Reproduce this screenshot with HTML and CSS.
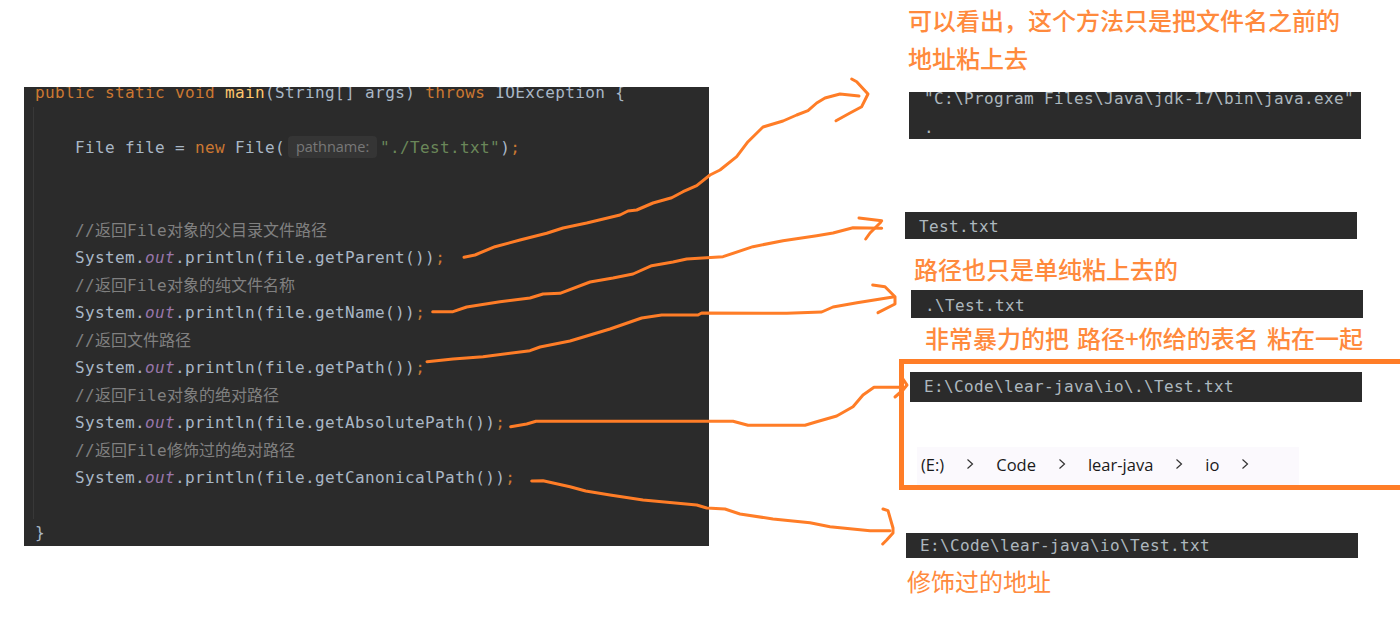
FILE: index.html
```html
<!DOCTYPE html>
<html lang="zh-CN">
<head>
<meta charset="utf-8">
<title>File path methods</title>
<link rel="stylesheet" href="styles.css">
</head>
<body>
<main class="canvas">
  <section class="code">
    <div class="code-inner">
      <div class="line"><span class="kw">public static void</span> <span class="fn">main</span>(String[] args) <span class="kw">throws</span> IOException {</div>
      <div class="method">
        <div class="line"></div>
        <div class="line">File file = <span class="kw">new</span> File(<span class="hint">pathname:</span><span class="str">"./Test.txt"</span>)<span class="kw">;</span></div>
        <div class="line"></div>
        <div class="line"></div>
        <div class="line cm">//<span class="cjk">返回</span>File<span class="cjk">对象的父目录文件路径</span></div>
        <div class="line">System.<span class="field">out</span>.println(file.getParent())<span class="kw">;</span></div>
        <div class="line cm">//<span class="cjk">返回</span>File<span class="cjk">对象的纯文件名称</span></div>
        <div class="line">System.<span class="field">out</span>.println(file.getName())<span class="kw">;</span></div>
        <div class="line cm">//<span class="cjk">返回文件路径</span></div>
        <div class="line">System.<span class="field">out</span>.println(file.getPath())<span class="kw">;</span></div>
        <div class="line cm">//<span class="cjk">返回</span>File<span class="cjk">对象的绝对路径</span></div>
        <div class="line">System.<span class="field">out</span>.println(file.getAbsolutePath())<span class="kw">;</span></div>
        <div class="line cm">//<span class="cjk">返回</span>File<span class="cjk">修饰过的绝对路径</span></div>
        <div class="line">System.<span class="field">out</span>.println(file.getCanonicalPath())<span class="kw">;</span></div>
        <div class="line"></div>
      </div>
      <div class="line">}</div>
    </div>
  </section>

  <p class="note note-a">可以看出，这个方法只是把文件名之前的<br>地址粘上去</p>
  <div class="out out-a"><div class="out-first">"C:\Program Files\Java\jdk-17\bin\java.exe"</div><div class="out-second">.</div></div>
  <div class="out out-b">Test.txt</div>
  <p class="note note-b">路径也只是单纯粘上去的</p>
  <div class="out out-c">.\Test.txt</div>
  <p class="note note-c">非常暴力的把 路径+你给的表名 粘在一起</p>
  <div class="out out-d">E:\Code\lear-java\io\.\Test.txt</div>
  <nav class="crumbs">
    <span class="crumb crumb-drive">(E:)</span>
    <svg class="chev" viewBox="0 0 8 12"><path d="M1.5 1.5 6.5 6l-5 4.5"/></svg>
    <span class="crumb">Code</span>
    <svg class="chev" viewBox="0 0 8 12"><path d="M1.5 1.5 6.5 6l-5 4.5"/></svg>
    <span class="crumb">lear-java</span>
    <svg class="chev" viewBox="0 0 8 12"><path d="M1.5 1.5 6.5 6l-5 4.5"/></svg>
    <span class="crumb">io</span>
    <svg class="chev" viewBox="0 0 8 12"><path d="M1.5 1.5 6.5 6l-5 4.5"/></svg>
  </nav>
  <div class="frame"></div>
  <div class="out out-e">E:\Code\lear-java\io\Test.txt</div>
  <p class="note note-e">修饰过的地址</p>

  <svg class="ink" viewBox="0 0 1400 618">
    <path d="M464 257.3 475 255 495 246.7 520 240 546.7 233.3 563 228 586.7 223 620 215 628 211 636.7 210 653 203 671.7 197.7 683 191.7 696.7 185.7 710 175 720 170 736.7 156.7 748 141.7 763 127 783 121 796.7 115 808 110.7 816.7 103 825 98 840 94 859 96"/>
    <path d="M851.7 79 856.7 81.7 868 94 861.7 106.7 850 113 836 120.7"/>
    <path d="M432.7 311.7 453 311.7 466.7 307 500 301.7 530 298 543 294 560 293.3 590 282 613 278 633 274 651.7 265.7 673 262 686.7 259 706.7 257.7 723 256.7 753 246.7 783 240.7 816.7 235.7 833 233 853 227.7 881.7 228.3"/>
    <path d="M859 218 881.7 220.7 880 223 870 233 865.7 239"/>
    <path d="M427 361.7 453 359 483 356.7 530 350.7 540 347 570 341 586.7 336 610 329 641.7 318 661.7 315 698 315 701.7 313 786.7 313.3 821.7 312 833 307 857 302.7 893 297"/>
    <path d="M872.7 285 885 286.7 895 296.7 895 304 878 312.7"/>
    <path d="M510.7 426.7 526.7 424 536 421.3 733 421.3 748 425.3 805 425.3 816.7 421.7 836.7 416 853 406.7 863 395 874 387.3 903 387.3"/>
    <path d="M903 379 907 385 903 390 895 397"/>
    <path d="M531.7 481 543 480.7 570 486.7 585.7 491 610 495 643 500 696.7 505 706.7 508 725 509 740 514 773 519 810 522.7 830 526.7 870 530.7 890 530.7"/>
    <path d="M883 509 888 510.7 893 528 893 533 886.7 540 882.7 544"/>
  </svg>
</main>
</body>
</html>
```

FILE: styles.css
```css
* { box-sizing: border-box; }
html, body { margin: 0; background: #fff; }
.canvas { position: relative; width: 1400px; height: 618px; overflow: hidden; background: #fff; }

.code, .out {
  font-family: "DejaVu Sans Mono", "Noto Sans CJK SC", monospace;
  font-size: 16px;
  letter-spacing: 0.37px;
  background: #2b2b2b;
  color: #a9b7c6;
}
.code { position: absolute; left: 24px; top: 87px; width: 685px; height: 459px; overflow: hidden; padding-left: 11px; }
.code-inner { margin-top: -8px; }
.line { height: 27.5px; line-height: 27.5px; white-space: pre; }
.method { margin-left: -2px; padding-left: 41px; border-left: 1px solid #383838; height: 412px; }
.kw { color: #cc7832; }
.fn { color: #ffc66d; }
.str { color: #6a8759; }
.field { color: #9876aa; font-style: italic; }
.cm { color: #808080; }
.cjk { font-family: "Noto Sans CJK SC", sans-serif; font-size: 16px; letter-spacing: 0; line-height: 1; }
.hint {
  display: inline-block; width: 89px; height: 22px; line-height: 22px; margin: 0 3px;
  background: #353535; border-radius: 4px; color: #787878; text-align: center;
  font-family: "Open Sans", sans-serif; font-size: 14.5px; letter-spacing: 0;
  vertical-align: 1px;
}

.note {
  position: absolute; margin: 0; color: #ff8a3d; font-weight: 500;
  font-family: "Noto Sans CJK SC", sans-serif; font-size: 24px; line-height: 38px; white-space: nowrap;
}
.note-a { left: 908px; top: 1px; }
.note-b { left: 914px; top: 250px; }
.note-c { left: 925px; top: 319px; word-spacing: 2.7px; }
.note-e { left: 907px; top: 562px; font-weight: 400; }

.out { position: absolute; width: 452px; padding-left: 14px; color: #adb8bf; white-space: pre; line-height: 1; display: flex; align-items: center; }
.out-a { left: 909px; top: 92px; height: 47px; padding-left: 15px; display: block; }
.out-first { line-height: 14px; }
.out-second { line-height: 16px; margin-top: 14px; }
.out-b { left: 905px; top: 212px; height: 27px; padding-top: 2px; }
.out-c { left: 911px; top: 290px; height: 28px; padding-top: 3px; }
.out-d { left: 910px; top: 372px; height: 30px; }
.out-e { left: 906px; top: 533px; height: 25px; }

.frame { position: absolute; left: 899px; top: 359px; width: 520px; height: 131px; border: 5px solid #ff7d27; }

.crumbs {
  position: absolute; left: 917px; top: 447px; width: 382px; height: 40px;
  background: #fbf9fd; color: #1a1a1a; display: flex; align-items: center;
  font-family: "Open Sans", sans-serif; font-size: 16.5px; padding: 0 0 6px 4px;
}
.crumb-drive { margin-right: 19px; }
.chev { width: 8px; height: 12px; margin-right: 22px; }
.chev path { fill: none; stroke: #333; stroke-width: 1.2; }
.crumb { margin-right: 22px; }

.ink { position: absolute; left: 0; top: 0; width: 1400px; height: 618px; pointer-events: none; }
.ink path { fill: none; stroke: #ff7d27; stroke-width: 3; stroke-linecap: round; stroke-linejoin: round; }
```
